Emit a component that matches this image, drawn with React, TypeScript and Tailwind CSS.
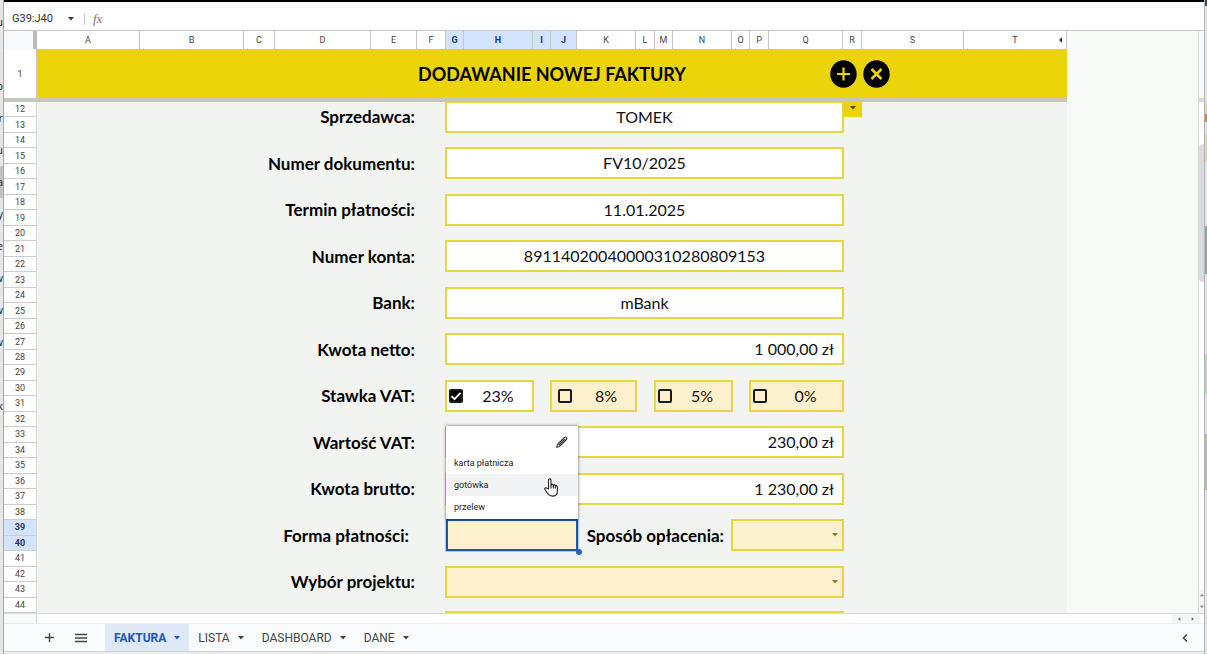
import React, { useState } from 'react';

const COLS =
  'grid-cols-[33px_103px_104px_31px_96px_46px_29px_18px_69px_18px_26px_59px_19px_18px_59px_18px_19px_74px_19px_102px_103px]';

const LETTERS = 'ABCDEFGHIJKLMNOPQRST'.split('');
const SELECTED_COLS = ['G', 'H', 'I', 'J'];
const ROWS = Array.from({ length: 33 }, (_, i) => i + 12);
const SELECTED_ROWS = [39, 40];
const METHODS = ['karta płatnicza', 'gotówka', 'przelew'];
const SHEETS = ['FAKTURA', 'LISTA', 'DASHBOARD', 'DANE'];

// Clipped letters of the window that lies behind the sheet
const BEHIND = ['u', '', 'p', 'r', 'u', 'a', 'y', 'e', 'w', 'w', 'w', '', 'k'];

// Grid row of a field: each takes two sheet rows, with one empty row below
const FIELD_ROWS = [
  'row-[1/3]',
  'row-[4/6]',
  'row-[7/9]',
  'row-[10/12]',
  'row-[13/15]',
  'row-[16/18]',
  'row-[19/21]',
  'row-[22/24]',
  'row-[25/27]',
  'row-[28/30]',
  'row-[31/33]',
];

const Caret = ({ className = '' }: { className?: string }) => (
  <svg className={className} width="6" height="4" viewBox="0 0 6 4" fill="currentColor" aria-hidden="true">
    <path d="M0 0h6L3 3.6z" />
  </svg>
);

interface LabelProps {
  slot: number;
  htmlFor?: string;
  className?: string;
  children: React.ReactNode;
}

const Label: React.FC<LabelProps> = ({ slot, htmlFor, className = 'col-[2/7] pr-0.5', children }) => (
  <label
    htmlFor={htmlFor}
    className={`${FIELD_ROWS[slot]} ${className} flex items-center justify-end whitespace-nowrap text-[17px] leading-5 font-bold text-black`}
  >
    {children}
  </label>
);

interface FieldProps {
  slot: number;
  id: string;
  label: string;
  value: string;
  right?: boolean;
}

const Field: React.FC<FieldProps> = ({ slot, id, label, value, right }) => (
  <>
    <Label slot={slot} htmlFor={id}>
      {label}
    </Label>
    <input
      id={id}
      defaultValue={value}
      className={`${FIELD_ROWS[slot]} col-[8/19] -mx-px -mt-px min-w-0 border-2 border-[#e4d740] bg-white px-2 text-[16px] leading-5 text-[#111] outline-none ${right ? 'text-right' : 'text-center'}`}
    />
  </>
);

interface RateProps {
  id: string;
  rate: string;
  className: string;
  defaultChecked?: boolean;
}

const Rate: React.FC<RateProps> = ({ id, rate, className, defaultChecked = false }) => {
  const [checked, setChecked] = useState(defaultChecked);

  return (
    <div
      className={`row-[19/21] -mx-px -mt-px grid grid-cols-subgrid items-center border-2 border-[#e4d740] ${className} ${checked ? 'bg-white' : 'bg-[#fdf1cd]'}`}
    >
      <div className="relative flex size-3.5 justify-self-center">
        <input
          id={id}
          type="checkbox"
          checked={checked}
          onChange={(e) => setChecked(e.target.checked)}
          className="size-3.5 appearance-none rounded-[2px] border-2 border-[#1a1a1a] checked:bg-black"
        />
        {checked && (
          <svg className="pointer-events-none absolute inset-0" viewBox="0 0 14 14" fill="none" stroke="white" strokeWidth="1.8" aria-hidden="true">
            <path d="M2.5 7.2l3 3 6-6.4" />
          </svg>
        )}
      </div>
      <label htmlFor={id} className="text-center text-[16px] leading-5 text-[#111]">
        {rate}
      </label>
    </div>
  );
};

const SelectBox = ({ id, className }: { id: string; className: string }) => (
  <div className={`relative -mx-px -mt-px flex border-2 border-[#e4d740] bg-[#fdf1cd] ${className}`}>
    <select id={id} className="min-w-0 flex-1 appearance-none bg-transparent outline-none">
      <option value=""></option>
    </select>
    <Caret className="pointer-events-none absolute top-3 right-1 text-[#8f7d2c]" />
  </div>
);

const PaymentMethod = () => {
  const [open, setOpen] = useState(true);
  const [method, setMethod] = useState('');

  const pick = (name: string) => {
    setMethod(name);
    setOpen(false);
  };

  return (
    <div className="relative z-10 col-[8/12] row-[28/30] -mt-px -mr-px flex">
      <button
        id="forma"
        aria-haspopup="listbox"
        onClick={() => setOpen(!open)}
        className="flex-1 border-2 border-[#1f57a8] bg-[#fdf1cd] text-[16px] leading-5 text-[#111] shadow-[0_0_0_1px_#a5c6f7]"
      >
        {method}
      </button>
      <span className="absolute -right-1 -bottom-1 size-1.5 rounded-full bg-[#2a62bd]"></span>

      {open && (
        <div className="absolute bottom-full left-0 w-full bg-white pb-px shadow-[0_0_3px_rgba(0,0,0,0.6)]">
          <div className="flex h-[26px] items-center justify-end pt-1.5 pr-2.5">
            <button aria-label="Edytuj" className="size-3">
              <svg viewBox="0 0 12 12" fill="none" stroke="#333" strokeWidth="1.1" aria-hidden="true">
                <path d="M.8 11.2l.6-2.7 7-7c.6-.6 1.500-.6 2 0s.6 1.400 0 2l-7 7zM2.800 9.200l6-6" />
              </svg>
            </button>
          </div>
          <ul role="listbox">
            {METHODS.map((name) => (
              <li key={name}>
                <button
                  onClick={() => pick(name)}
                  className={`flex h-[22px] w-full items-center px-2 font-[Roboto,sans-serif] text-[9px] leading-3 text-[#222] ${name === 'gotówka' ? 'bg-[#f1f3f4]' : ''}`}
                >
                  {name}
                </button>
              </li>
            ))}
          </ul>
          {/* Hand pointer over the hovered option */}
          <svg className="pointer-events-none absolute right-5 bottom-[22px] h-[19px] w-3.5" viewBox="0 0 14 19" fill="white" stroke="#222" strokeWidth="1.1" strokeLinejoin="round" aria-hidden="true">
            <path d="M4.500 11V2.200C4.500.4 7 .4 7 2.200V7c.3-1 2.200-.8 2.300.4.500-.9 2-.6 2.100.5.700-.6 2-.2 2 1v4c0 3-1.800 5.200-5 5.200-2.500 0-3.700-1-4.800-2.800L.9 11.500c-.8-1.400 1-2.300 2-1.300z" />
            <path d="M7 7v3.500M9.300 7.500v3M11.400 8v2.500" />
          </svg>
        </div>
      )}
    </div>
  );
};

export default function App() {
  return (
    <div className="flex h-screen overflow-hidden bg-[#eceeec] font-[Lato,Carlito,sans-serif]">
      <aside aria-hidden="true" className="flex w-1 shrink-0 flex-col overflow-hidden border-r border-[#a9a9a9] bg-[#e6e6e6] pt-1.5">
        {BEHIND.map((letter, i) => (
          <span
            key={i}
            className={`flex h-8 shrink-0 items-center justify-end font-['Open_Sans',sans-serif] text-[11px] leading-4 text-[#222] ${letter === 'a' ? 'bg-[#c2c2c2]' : ''}`}
          >
            {letter}
          </span>
        ))}
      </aside>

      <main className="flex min-w-0 flex-1 flex-col">
        <div className="h-0.5 shrink-0 bg-black"></div>
        <div className="h-1.5 shrink-0 bg-[#f8f9fa]"></div>

        {/* Name box and formula bar */}
        <div className="flex h-[22px] shrink-0 items-center bg-white pl-2 font-[Roboto,sans-serif] text-[#333]">
          <button className="flex w-[62px] items-center justify-between text-[11px] leading-4">
            G39:J40
            <Caret />
          </button>
          <span className="ml-2.5 h-3 w-px bg-[#c9c9c9]"></span>
          <label htmlFor="formula" className="ml-2 font-['Liberation_Serif',serif] text-[13px] leading-4 text-[#777] italic">
            fx
          </label>
          <input id="formula" className="ml-2 min-w-0 flex-1 bg-transparent outline-none" />
        </div>

        <div className="flex min-h-0 flex-1 border-t border-[#c6c8c6] bg-[#f8faf8]">
          <div className="flex flex-col">
            {/* Column letters */}
            <div className={`grid h-[18px] shrink-0 ${COLS} bg-white font-[Roboto,sans-serif] text-[9px] leading-3 text-[#444]`}>
              <div className="border-r-4 border-[#bcbdbc] bg-[#f8f9fa]"></div>
              {LETTERS.map((letter) => (
                <div
                  key={letter}
                  className={`relative flex items-center justify-center border-r border-[#c6c8c6] ${SELECTED_COLS.includes(letter) ? 'bg-[#d3e3fd] font-bold text-[#1b3764]' : ''}`}
                >
                  {letter}
                  {letter === 'T' && (
                    <svg className="absolute right-1 h-1.5 w-[3px]" viewBox="0 0 3 6" aria-hidden="true">
                      <path d="M3 0v6L0 3z" fill="#333" />
                    </svg>
                  )}
                </div>
              ))}
            </div>

            {/* Frozen title row */}
            <div className={`grid h-[49px] shrink-0 ${COLS} bg-[#ebd409]`}>
              <div className="col-1 row-1 flex items-center justify-center border-r border-[#c6c8c6] bg-white font-[Roboto,sans-serif] text-[9px] leading-3 text-[#444]">
                1
              </div>
              <h1 className="col-[2/22] row-1 flex items-center justify-center text-[18px] leading-6 font-bold text-black">
                DODAWANIE NOWEJ FAKTURY
              </h1>
              <div className="col-[18/22] row-1 flex items-center gap-1.5 pl-[61px]">
                <button aria-label="Dodaj">
                  <svg width="27" height="28" viewBox="0 0 27 28" aria-hidden="true">
                    <ellipse cx="13.500" cy="14" rx="13.200" ry="13.800" />
                    <path d="M13.500 7.500v13M7 14h13" stroke="#ebd409" strokeWidth="2.200" />
                  </svg>
                </button>
                <button aria-label="Usuń">
                  <svg width="27" height="28" viewBox="0 0 27 28" aria-hidden="true">
                    <ellipse cx="13.500" cy="14" rx="13.200" ry="13.800" />
                    <path d="M8.500 9l10 10M18.500 9l-10 10" stroke="#ebd409" strokeWidth="2.600" />
                  </svg>
                </button>
              </div>
            </div>
            <div className="h-1 shrink-0 bg-[#c5c6bd]"></div>

            {/* Invoice form */}
            <div className={`grid min-h-0 flex-1 grid-rows-[repeat(33,minmax(0,1fr))] ${COLS} overflow-hidden bg-[#f2f4f2]`}>
              <div className="col-1 row-[1/34] grid grid-rows-subgrid border-r border-[#d5d7d5] bg-white font-[Roboto,sans-serif] text-[9px] leading-3 text-[#444]">
                {ROWS.map((row) => (
                  <div
                    key={row}
                    className={`flex items-center justify-center border-b border-[#cdcfcd] ${SELECTED_ROWS.includes(row) ? 'bg-[#d3e3fd] font-bold text-[#1b3764]' : ''}`}
                  >
                    {row}
                  </div>
                ))}
              </div>

              <Field slot={0} id="sprzedawca" label="Sprzedawca:" value="TOMEK" />
              <button aria-label="Wybierz sprzedawcę" className="col-19 row-1 flex items-start justify-center bg-[#ebd409] pt-1 text-[#4d4610]">
                <Caret />
              </button>
              <Field slot={1} id="numer" label="Numer dokumentu:" value="FV10/2025" />
              <Field slot={2} id="termin" label="Termin płatności:" value="11.01.2025" />
              <Field slot={3} id="konto" label="Numer konta:" value="89114020040000310280809153" />
              <Field slot={4} id="bank" label="Bank:" value="mBank" />
              <Field slot={5} id="netto" label="Kwota netto:" value="1 000,00 zł" right />

              <Label slot={6} htmlFor="vat23">Stawka VAT:</Label>
              <Rate id="vat23" rate="23%" className="col-[8/10]" defaultChecked />
              <Rate id="vat8" rate="8%" className="col-[11/13]" />
              <Rate id="vat5" rate="5%" className="col-[14/16]" />
              <Rate id="vat0" rate="0%" className="col-[17/19]" />

              <Field slot={7} id="vat" label="Wartość VAT:" value="230,00 zł" right />
              <Field slot={8} id="brutto" label="Kwota brutto:" value="1 230,00 zł" right />

              <Label slot={9} htmlFor="forma" className="col-[2/7] pr-2">Forma płatności:</Label>
              <PaymentMethod />
              <Label slot={9} htmlFor="sposob" className="col-[12/16] pr-2">Sposób opłacenia:</Label>
              <SelectBox id="sposob" className="col-[16/19] row-[28/30]" />

              <Label slot={10} htmlFor="projekt">Wybór projektu:</Label>
              <SelectBox id="projekt" className="col-[8/19] row-[31/33]" />
              <div className="col-[8/19] row-33 -mx-px h-0.5 self-end bg-[#e4d740]"></div>
            </div>
          </div>

          <div className="flex-1"></div>

          {/* Vertical scrollbar */}
          <div className="flex w-1.5 shrink-0 flex-col border-l border-[#d9dbd9] bg-white">
            <div className="h-[67px] bg-[#f8f9fa]"></div>
            <div className="h-1 bg-[#d5d8da]"></div>
            <div className="mt-[42px] h-[138px] rounded-l bg-[#d9dbdd]"></div>
            <div className="mt-auto flex h-6 flex-col items-center justify-around bg-[#f4f5f5] text-[#777]">
              <Caret className="w-1 rotate-180" />
              <Caret className="w-1" />
            </div>
          </div>
        </div>

        {/* Horizontal scrollbar */}
        <div className="flex h-2.5 shrink-0 items-center border-t border-[#d9dbd9] bg-white">
          <div className="h-full w-[33px] border-r border-[#d5d7d5] bg-[#f8f9fa]"></div>
          <div className="mr-1 ml-auto flex h-full w-7 items-center justify-around bg-[#f4f5f5] text-[#777]">
            <Caret className="w-1 rotate-90" />
            <Caret className="w-1 -rotate-90" />
          </div>
        </div>

        {/* Sheet tabs */}
        <nav className="flex h-7 shrink-0 items-center rounded-b border-t border-[#eceeee] bg-[#f9fbfd] font-[Roboto,sans-serif] text-[#444]">
          <button aria-label="Dodaj arkusz" className="ml-10">
            <svg width="11" height="11" viewBox="0 0 11 11" stroke="currentColor" strokeWidth="1.400" aria-hidden="true">
              <path d="M5.500 1v9M1 5.500h9" />
            </svg>
          </button>
          <button aria-label="Wszystkie arkusze" className="mr-[18px] ml-5">
            <svg width="12" height="10" viewBox="0 0 12 10" stroke="currentColor" strokeWidth="1.400" aria-hidden="true">
              <path d="M0 1.500h12M0 5h12M0 8.500h12" />
            </svg>
          </button>
          {SHEETS.map((sheet, i) => (
            <button
              key={sheet}
              className={`flex h-full items-center gap-2 px-[9px] text-[12px] leading-4 ${i === 0 ? 'bg-[#dfe8f6] font-bold text-[#1c57b3]' : ''}`}
            >
              {sheet}
              <Caret />
            </button>
          ))}
          <button aria-label="Pokaż panel" className="mr-4 ml-auto">
            <svg width="6" height="8" viewBox="0 0 6 8" fill="none" stroke="currentColor" strokeWidth="1.500" aria-hidden="true">
              <path d="M5 .5L1.500 4 5 7.500" />
            </svg>
          </button>
        </nav>
        <div className="h-[3px] shrink-0 border-t border-[#d3d5d5]"></div>
      </main>

      <aside aria-hidden="true" className="flex w-[3px] shrink-0 flex-col border-l border-[#b5b5b5] bg-[#e4e4e8]">
        <div className="h-1.5 bg-[#3d4358]"></div>
        <div className="mt-24 h-3 bg-[#e3d7b0]"></div>
        <div className="h-2 bg-[#b8941a]"></div>
        <div className="mt-3 h-7 bg-[#ded3b8]"></div>
        <div className="mt-16 h-12 bg-[#8fa3a8]"></div>
        <div className="mt-20 h-10 bg-[#c3d0bf]"></div>
        <div className="mt-10 h-14 bg-[#b3b8b1]"></div>
      </aside>
    </div>
  );
}
